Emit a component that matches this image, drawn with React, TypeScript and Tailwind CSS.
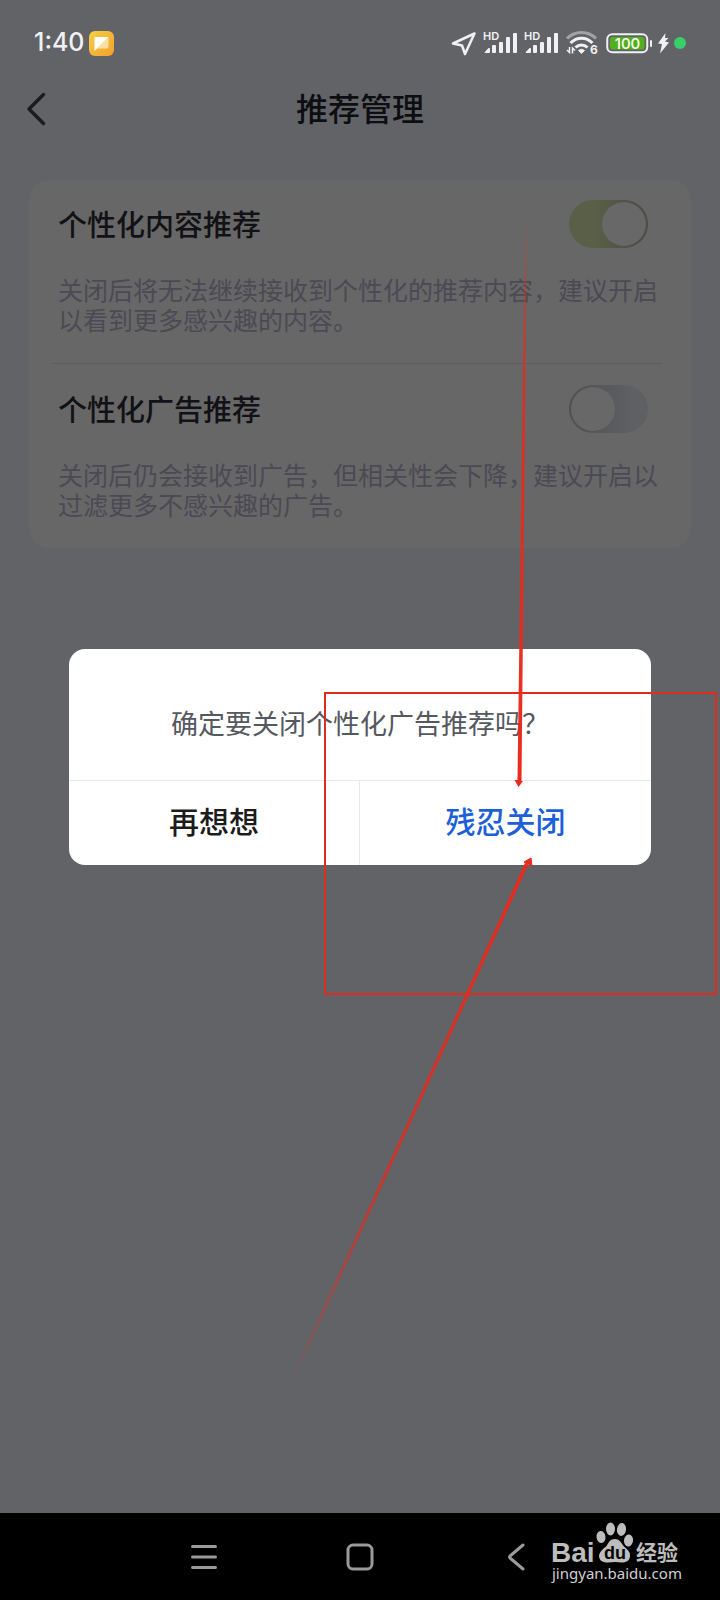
import { useState } from "react";

type Setting = { id: string; title: string; desc: string; on: boolean };

const SETTINGS: Setting[] = [
  { id: "content", title: "个性化内容推荐", desc: "关闭后将无法继续接收到个性化的推荐内容，建议开启以看到更多感兴趣的内容。", on: true },
  { id: "ads", title: "个性化广告推荐", desc: "关闭后仍会接收到广告，但相关性会下降，建议开启以过滤更多不感兴趣的广告。", on: false },
];

function Signal() {
  return (
    <svg width="33" height="24" viewBox="0 0 33 24" fill="#f1f1f3" className="ml-2 overflow-visible">
      <text x="-1" y="9" fontSize="11" fontWeight="600" fontFamily="Inter, sans-serif">HD</text>
      <path d="M1 21.500L4.500 17.500H5.500V21.500Z" stroke="#f1f1f3" strokeLinejoin="round" />
      <rect x="8" y="14" width="4" height="8" rx="1" />
      <rect x="15" y="11" width="4" height="11" rx="1" />
      <rect x="22" y="6" width="4" height="16" rx="1" />
      <rect x="29" y="2" width="4" height="20" rx="1" />
    </svg>
  );
}

function StatusBar() {
  return (
    <div className="flex h-[86px] items-center pl-[34px] pr-[34px] text-[#f1f1f3]">
      <span className="font-[Inter,'Noto_Sans_CJK_SC',sans-serif] text-[25px] font-medium">1:40</span>
      <svg width="25" height="25" viewBox="0 0 25 25" className="ml-1">
        <defs>
          <linearGradient id="note" x1="0" y1="0" x2="1" y2="1">
            <stop offset="0" stopColor="#f5cf42" />
            <stop offset="1" stopColor="#f4a02e" />
          </linearGradient>
        </defs>
        <rect width="25" height="25" rx="6" fill="url(#note)" />
        <path d="M19.500 6V16.500L17.500 17.500H8Z" fill="#fbe0a4" />
        <path d="M5.500 6H19.500L5.500 20Z" fill="#fff" />
      </svg>
      <svg width="25" height="25" viewBox="0 0 25 25" fill="none" stroke="#f1f1f3" strokeWidth="2.500" strokeLinejoin="round" className="ml-auto">
        <path d="M23.500 2.500L2 12.500L11 14.500L14 23Z" />
      </svg>
      <Signal />
      <Signal />
      <svg width="32" height="24" viewBox="0 0 32 24" fill="none" stroke="#f1f1f3" strokeWidth="3" className="ml-2 overflow-visible">
        <path d="M1 7.500C9 -0.500 22 -0.500 30 7.500" stroke="#a2a3a6" />
        <path d="M4.500 12C11 5.500 20 5.500 26.500 12" />
        <path d="M9.500 16.500C13 13 18 13 21.500 16.500" />
        <path d="M12.500 19.500Q15.500 17 18.500 19.500L15.500 22.500Z" fill="#f1f1f3" strokeWidth="1" />
        <path d="M3.500 16V21.500L1 19M6.500 22.500V17L9 19.500" strokeWidth="1.500" />
        <text x="24" y="23" fontSize="12" fontWeight="700" fontFamily="Inter, sans-serif" fill="#f1f1f3" stroke="none">6</text>
      </svg>
      <svg width="47" height="21" viewBox="0 0 47 21" className="ml-2">
        <rect x="1.250" y="1.250" width="40" height="18" rx="5" fill="none" stroke="#f1f1f3" strokeWidth="2" />
        <rect x="4" y="4" width="34.500" height="12.500" rx="2.500" fill="#52b01c" />
        <rect x="44" y="7" width="2" height="7" rx="1" fill="#f1f1f3" />
        <text x="21.500" y="15.500" textAnchor="middle" fontSize="15" fontWeight="500" fontFamily="Inter, sans-serif" fill="#fff">100</text>
      </svg>
      <svg width="13" height="21" viewBox="0 0 13 21" fill="#f1f1f3" className="ml-1">
        <path d="M8.500 0L1 10.500L5 11L3 20.500L12 9.500L8 8.500L11.500 5H8Z" />
      </svg>
      <span className="ml-1 size-3 rounded-full bg-[#37cf67]" />
    </div>
  );
}

function Row({ item }: { item: Setting }) {
  const [on, setOn] = useState(item.on);
  return (
    <div>
      <label className="flex items-center justify-between pr-[14px]">
        <span className="text-[29px] font-medium text-[#121216]">{item.title}</span>
        <span className={`relative flex h-12 w-[79px] rounded-full p-0.5 ${on ? "justify-end bg-linear-to-r from-[#5a6048] from-30% to-[#4a4b42]" : "justify-start bg-linear-to-r from-[#505052] to-[#5e6064] to-80%"}`}>
          <input type="checkbox" role="switch" checked={on} onChange={(e) => setOn(e.target.checked)} className="absolute inset-0 size-full cursor-pointer appearance-none" />
          <span className="size-11 rounded-full bg-[#686868]" />
        </span>
      </label>
      <p className="mt-[26px] text-[25px] leading-[30px] text-[#4b4a54]">{item.desc}</p>
    </div>
  );
}

function Dialog() {
  return (
    <div className="absolute inset-0 flex items-center justify-center px-[69px]">
      <div role="dialog" aria-labelledby="ask" className="w-full overflow-hidden rounded-2xl bg-white">
        <p id="ask" className="flex h-[131px] items-center justify-center pt-[18px] text-[27px] text-[#55585e]">确定要关闭个性化广告推荐吗？</p>
        <div className="grid h-[85px] grid-cols-2 border-t border-[#e8e8e8] text-[30px] font-medium">
          <button type="button" className="border-r border-[#e8e8e8] pb-1 text-[#1c1c1c]">再想想</button>
          <button type="button" className="pb-1 text-[#1c5fd8]">残忍关闭</button>
        </div>
      </div>
    </div>
  );
}

function Marks() {
  return (
    <svg viewBox="0 0 720 1600" className="pointer-events-none absolute inset-x-0 top-0 w-full">
      <defs>
        <linearGradient id="down" gradientUnits="userSpaceOnUse" x1="526" y1="215" x2="519" y2="786">
          <stop offset="0" stopColor="#ea2a1c" stopOpacity="0" />
          <stop offset="0.300" stopColor="#e02c20" stopOpacity="0.900" />
          <stop offset="1" stopColor="#ea2a1c" />
        </linearGradient>
        <linearGradient id="up" gradientUnits="userSpaceOnUse" x1="290" y1="1385" x2="530" y2="860">
          <stop offset="0" stopColor="#ea2a1c" stopOpacity="0" />
          <stop offset="0.400" stopColor="#d82e24" stopOpacity="0.800" />
          <stop offset="1" stopColor="#ea2a1c" />
        </linearGradient>
      </defs>
      <rect x="325" y="693" width="391" height="301" fill="none" stroke="#e02c20" strokeWidth="2" />
      <path d="M525 215H527L521.500 781H523L518.500 787L514.500 780H517.500Z" fill="url(#down)" />
      <path d="M289 1385H291L528 864L532 866L531 858L524 862L525.500 863Z" fill="url(#up)" stroke="url(#up)" strokeWidth="1" />
    </svg>
  );
}

function NavBar() {
  return (
    <nav className="relative h-[87px] bg-black">
      <div className="mx-auto grid h-full w-[65%] grid-cols-3 place-items-center text-[#9a9a9a]">
        <button type="button" aria-label="菜单">
          <svg width="26" height="26" viewBox="0 0 26 26" stroke="currentColor" strokeWidth="3" strokeLinecap="round"><path d="M1.500 2.500H24.500M1.500 13H24.500M1.500 23.500H24.500" /></svg>
        </button>
        <button type="button" aria-label="主页">
          <svg width="28" height="28" viewBox="0 0 28 28" fill="none" stroke="currentColor" strokeWidth="3"><rect x="2" y="2" width="24" height="24" rx="5" /></svg>
        </button>
        <button type="button" aria-label="返回">
          <svg width="18" height="28" viewBox="0 0 18 28" fill="none" stroke="currentColor" strokeWidth="3" strokeLinecap="round" strokeLinejoin="round"><path d="M16 2L3 13Q2 14 3 15L16 26" /></svg>
        </button>
      </div>
      <Watermark />
    </nav>
  );
}

function Watermark() {
  return (
    <svg width="132" height="64" viewBox="0 0 132 64" fill="#bdbdbd" className="absolute right-[38px] top-2 overflow-visible">
      <text x="1" y="41" fontSize="28" fontWeight="700" fontFamily="'Liberation Sans', sans-serif">Bai</text>
      <ellipse cx="51" cy="16" rx="4.500" ry="6" transform="rotate(-8 51 16)" />
      <ellipse cx="60.500" cy="8" rx="4.500" ry="6.500" />
      <ellipse cx="71.500" cy="8.500" rx="4.500" ry="6.500" transform="rotate(8 71.500 8.500)" />
      <ellipse cx="78.500" cy="19.500" rx="4.500" ry="6" transform="rotate(8 78.500 19.500)" />
      <path d="M65 18C70 18 71 22 74 25.500C78 29 80.500 31 80 35.500C79 42 73 42 65 41C56 42 50 42 49 35.500C49 31 53 28 56.500 25C59 21 60 18 65 18Z" />
      <text x="65" y="38" textAnchor="middle" fontSize="18" fontWeight="700" fontFamily="'Liberation Sans', sans-serif" fill="#000">du</text>
      <text x="86" y="39" fontSize="21" fontWeight="700" fontFamily="'Noto Sans CJK SC', sans-serif">经验</text>
      <text x="2" y="58" fontSize="15" fontFamily="'Noto Sans', sans-serif" fill="#d0d0d0">jingyan.baidu.com</text>
    </svg>
  );
}

export default function App() {
  return (
    <div className="relative flex min-h-screen flex-col bg-[#626367] font-['Noto_Sans_CJK_SC',sans-serif]">
      <main className="relative flex-1">
        <StatusBar />
        <header className="grid h-[46px] grid-cols-[1fr_auto_1fr] items-center px-[26px]">
          <button type="button" aria-label="返回" className="justify-self-start">
            <svg width="20" height="34" viewBox="0 0 20 34" fill="none" stroke="#1b1c1c" strokeWidth="3.500" strokeLinecap="round" strokeLinejoin="round"><path d="M17.500 2.500L3 17L17.500 31.500" /></svg>
          </button>
          <h1 className="pb-1 text-[32px] leading-[42px] font-medium text-[#0d0e12]">推荐管理</h1>
        </header>
        <section className="mx-[29px] mt-12 rounded-[20px] bg-[#676767] px-[29px] pt-5 pb-[29px]">
          <Row item={SETTINGS[0]} />
          <hr className="-ml-1.5 mt-[29px] mb-[21px] border-[#5d5d5f]" />
          <Row item={SETTINGS[1]} />
        </section>
        <Dialog />
      </main>
      <NavBar />
      <Marks />
    </div>
  );
}
